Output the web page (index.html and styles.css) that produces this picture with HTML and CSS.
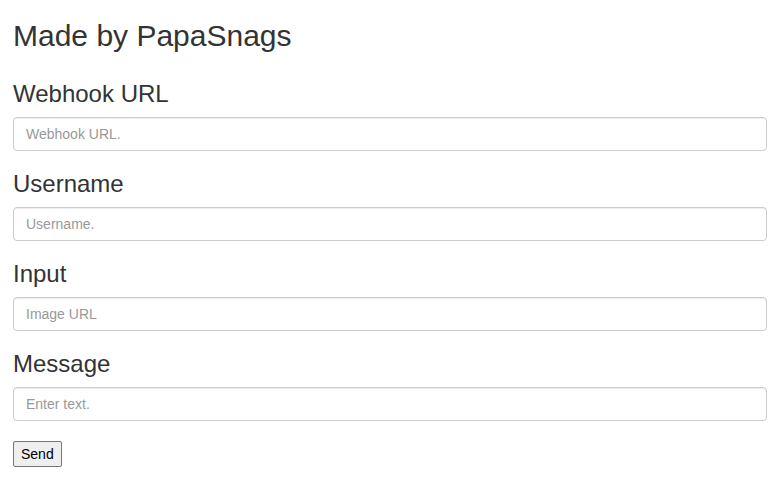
FILE: index.html
```html
<!DOCTYPE html>
<html>
<head>
<meta charset="utf-8">
<link rel="stylesheet" href="styles.css">
</head>
<body>
<div class="page">
  <h2 class="title">Made by PapaSnags</h2>
  <form class="form">
    <h3 class="label first">Webhook URL</h3>
    <input class="field" type="text" placeholder="Webhook URL.">
    <h3 class="label">Username</h3>
    <input class="field" type="text" placeholder="Username.">
    <h3 class="label">Input</h3>
    <input class="field" type="text" placeholder="Image URL">
    <h3 class="label">Message</h3>
    <input class="field" type="text" placeholder="Enter text.">
    <div class="actions"><button class="send" type="button">Send</button></div>
  </form>
</div>
</body>
</html>
```
FILE: styles.css
```css
html, body {
  margin: 0;
  padding: 0;
  background: #fff;
}
body {
  font-family: "Liberation Sans", Arial, Helvetica, sans-serif;
  font-size: 14px;
  line-height: 20px;
  color: #333;
}
.page {
  padding: 19px 11px 0 13px;
}
.title {
  font-size: 30px;
  font-weight: 500;
  line-height: 33px;
  margin: 0;
}
.form {
  margin: 0;
}
.label {
  font-size: 24px;
  font-weight: 500;
  line-height: 26px;
  margin: 20px 0 10px;
}
.label.first {
  margin-top: 29px;
}
.field {
  display: block;
  box-sizing: border-box;
  width: 100%;
  height: 34px;
  padding: 6px 12px;
  font-family: inherit;
  font-size: 14px;
  line-height: 20px;
  color: #555;
  background: #fff;
  border: 1px solid #ccc;
  border-radius: 4px;
  box-shadow: inset 0 1px 1px rgba(0, 0, 0, .075);
  margin: 0;
}
.field::placeholder {
  color: #999;
  opacity: 1;
}
.actions {
  margin-top: 20px;
}
.send {
  box-sizing: border-box;
  height: 26px;
  padding: 0 7px;
  font-family: inherit;
  font-size: 14px;
  line-height: 20px;
  color: #000;
  background: #efefef;
  border: 1px solid #767676;
  border-radius: 2px;
}
```
